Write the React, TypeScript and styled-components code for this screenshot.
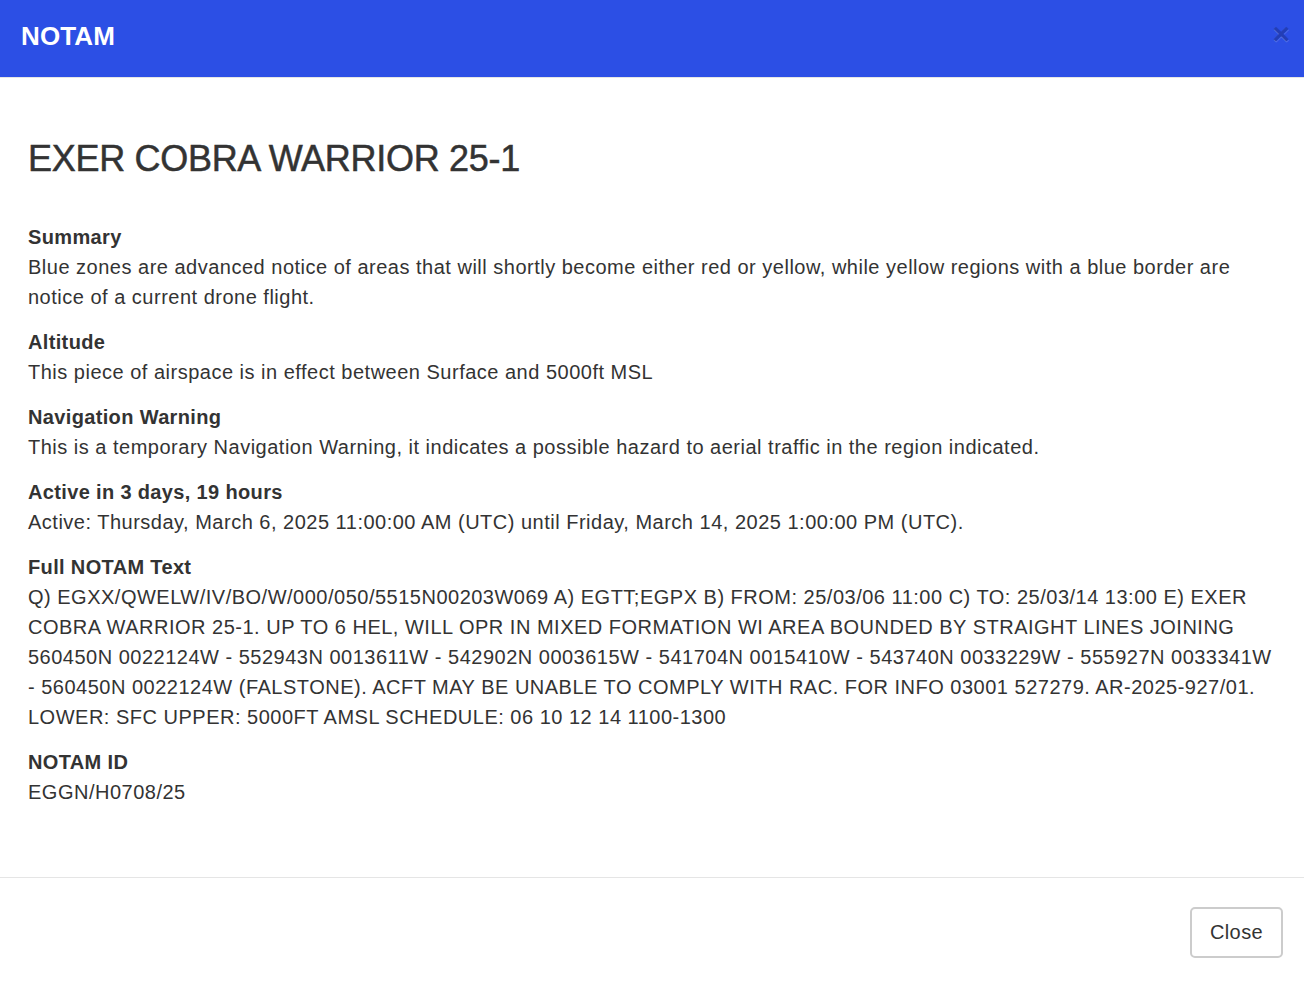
import styled, { createGlobalStyle } from "styled-components";

const GlobalStyle = createGlobalStyle`
  html, body {
    margin: 0;
    padding: 0;
    background: #fff;
  }
  body {
    font-family: "Liberation Sans", Arial, Helvetica, sans-serif;
    color: #333;
  }
  * { box-sizing: border-box; }
`;

const Modal = styled.div`
  display: flex;
  flex-direction: column;
  width: 1304px;
  min-height: 982px;
  background: #fff;
`;

const Header = styled.div`
  display: flex;
  align-items: center;
  justify-content: space-between;
  height: 78px;
  padding: 0 14px 0 21px;
  background: #2c4fe5;
  border-bottom: 1px solid #e5e5e5;
`;

const HeaderTitle = styled.h4`
  margin: -5px 0 0;
  color: #fff;
  font-size: 26px;
  font-weight: 700;
  line-height: 1;
  letter-spacing: 0.1px;
`;

const CloseX = styled.button`
  background: none;
  border: 0;
  padding: 0;
  margin-top: -9px;
  font-family: "Liberation Sans", Arial, sans-serif;
  font-size: 30px;
  font-weight: 700;
  line-height: 1;
  color: #000;
  opacity: 0.2;
  text-shadow: 0 1px 0 #fff;
  cursor: pointer;
`;

const Body = styled.div`
  flex: 1;
  padding: 0 23px 0 28px;
`;

const Title = styled.h1`
  margin: 61px 0 43px;
  font-size: 36px;
  font-weight: 400;
  line-height: 40px;
  letter-spacing: -0.3px;
  color: #333;
  -webkit-text-stroke: 0.5px #333;
`;

const Section = styled.div`
  margin-bottom: 15px;
`;

const Label = styled.div`
  font-size: 20px;
  font-weight: 700;
  line-height: 30px;
  letter-spacing: 0.35px;
`;

const Text = styled.div`
  font-size: 20px;
  line-height: 30px;
  letter-spacing: 0.5px;
`;

const Footer = styled.div`
  display: flex;
  justify-content: flex-end;
  align-items: flex-start;
  height: 105px;
  padding: 29px 21px 0 0;
  border-top: 1px solid #e5e5e5;
`;

const Button = styled.button`
  width: 93px;
  height: 51px;
  padding: 0;
  font-family: "Liberation Sans", Arial, sans-serif;
  font-size: 20px;
  letter-spacing: 0.4px;
  color: #333;
  background: #fff;
  border: 2px solid #ccc;
  border-radius: 5px;
  cursor: pointer;
`;

const sections = [
  {
    label: "Summary",
    text: "Blue zones are advanced notice of areas that will shortly become either red or yellow, while yellow regions with a blue border are notice of a current drone flight.",
  },
  {
    label: "Altitude",
    text: "This piece of airspace is in effect between Surface and 5000ft MSL",
  },
  {
    label: "Navigation Warning",
    text: "This is a temporary Navigation Warning, it indicates a possible hazard to aerial traffic in the region indicated.",
  },
  {
    label: "Active in 3 days, 19 hours",
    text: "Active: Thursday, March 6, 2025 11:00:00 AM (UTC) until Friday, March 14, 2025 1:00:00 PM (UTC).",
  },
  {
    label: "Full NOTAM Text",
    text: "Q) EGXX/QWELW/IV/BO/W/000/050/5515N00203W069 A) EGTT;EGPX B) FROM: 25/03/06 11:00 C) TO: 25/03/14 13:00 E) EXER COBRA WARRIOR 25-1. UP TO 6 HEL, WILL OPR IN MIXED FORMATION WI AREA BOUNDED BY STRAIGHT LINES JOINING 560450N 0022124W - 552943N 0013611W - 542902N 0003615W - 541704N 0015410W - 543740N 0033229W - 555927N 0033341W - 560450N 0022124W (FALSTONE). ACFT MAY BE UNABLE TO COMPLY WITH RAC. FOR INFO 03001 527279. AR-2025-927/01. LOWER: SFC UPPER: 5000FT AMSL SCHEDULE: 06 10 12 14 1100-1300",
  },
  {
    label: "NOTAM ID",
    text: "EGGN/H0708/25",
  },
];

const App = () => {
  return (
    <>
      <GlobalStyle />
      <Modal>
        <Header>
          <HeaderTitle>NOTAM</HeaderTitle>
          <CloseX aria-label="Close">×</CloseX>
        </Header>
        <Body>
          <Title>EXER COBRA WARRIOR 25-1</Title>
          {sections.map((s) => (
            <Section key={s.label}>
              <Label>{s.label}</Label>
              <Text>{s.text}</Text>
            </Section>
          ))}
        </Body>
        <Footer>
          <Button>Close</Button>
        </Footer>
      </Modal>
    </>
  );
};

export default App;
